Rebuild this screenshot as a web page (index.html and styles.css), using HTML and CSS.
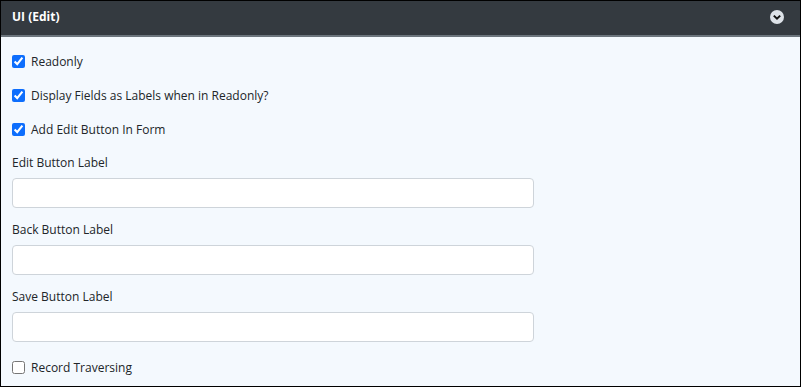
FILE: index.html
```html
<!DOCTYPE html>
<html lang="en">
<head>
  <meta charset="UTF-8">
  <title>UI (Edit)</title>
  <link rel="stylesheet" href="styles.css">
</head>
<body>
  <div class="panel">
    <div class="panel-head">
      <span class="panel-title">UI (Edit)</span>
      <svg class="toggle" width="14" height="14" viewBox="0 0 14 14">
        <circle cx="7" cy="7" r="7" fill="#dde2e8"/>
        <path d="M3.8 5.6 L7 8.7 L10.2 5.6" fill="none" stroke="#111" stroke-width="2"/>
      </svg>
    </div>
    <div class="panel-body">
      <label class="check"><input type="checkbox" checked> Readonly</label>
      <label class="check"><input type="checkbox" checked> Display Fields as Labels when in Readonly?</label>
      <label class="check"><input type="checkbox" checked> Add Edit Button In Form</label>

      <div class="field">
        <label class="field-label">Edit Button Label</label>
        <input class="text" type="text">
      </div>
      <div class="field">
        <label class="field-label">Back Button Label</label>
        <input class="text" type="text">
      </div>
      <div class="field">
        <label class="field-label">Save Button Label</label>
        <input class="text" type="text">
      </div>

      <label class="check traverse"><input type="checkbox"> Record Traversing</label>
    </div>
  </div>
</body>
</html>
```

FILE: styles.css
```css
body {
  margin: 0;
  font-family: "Open Sans", "Noto Sans", sans-serif;
  font-size: 12px;
  color: #212529;
}
.panel {
  width: 801px;
  height: 387px;
  box-sizing: border-box;
  border: 1px solid #000;
  background: #f4f9fe;
  overflow: hidden;
}
.panel-head {
  height: 34px;
  background: #343a40;
  border-bottom: 2px solid #6c757d;
  display: flex;
  align-items: center;
  justify-content: space-between;
  padding: 0 16px 0 11px;
  box-sizing: content-box;
}
.panel-title {
  color: #fff;
  font-weight: 700;
  font-size: 12px;
  margin-top: -3px;
}
.toggle {
  margin-top: -3px;
}
.panel-body {
  padding: 16px 11px 0;
}
.check {
  display: flex;
  align-items: center;
  height: 17px;
  margin-bottom: 17px;
}
.check input {
  width: 13px;
  height: 13px;
  margin: 0 6px 0 0;
  accent-color: #0d6efd;
}
.traverse {
  margin-top: 17px;
}
.field {
  margin-bottom: 14px;
}
.field-label {
  display: block;
  font-weight: 500;
  margin-top: 1px;
  margin-bottom: 7px;
  line-height: 16px;
}
.text {
  display: block;
  width: 522px;
  height: 30px;
  box-sizing: border-box;
  border: 1px solid #ced4da;
  border-radius: 4px;
  background: #fff;
}
```
